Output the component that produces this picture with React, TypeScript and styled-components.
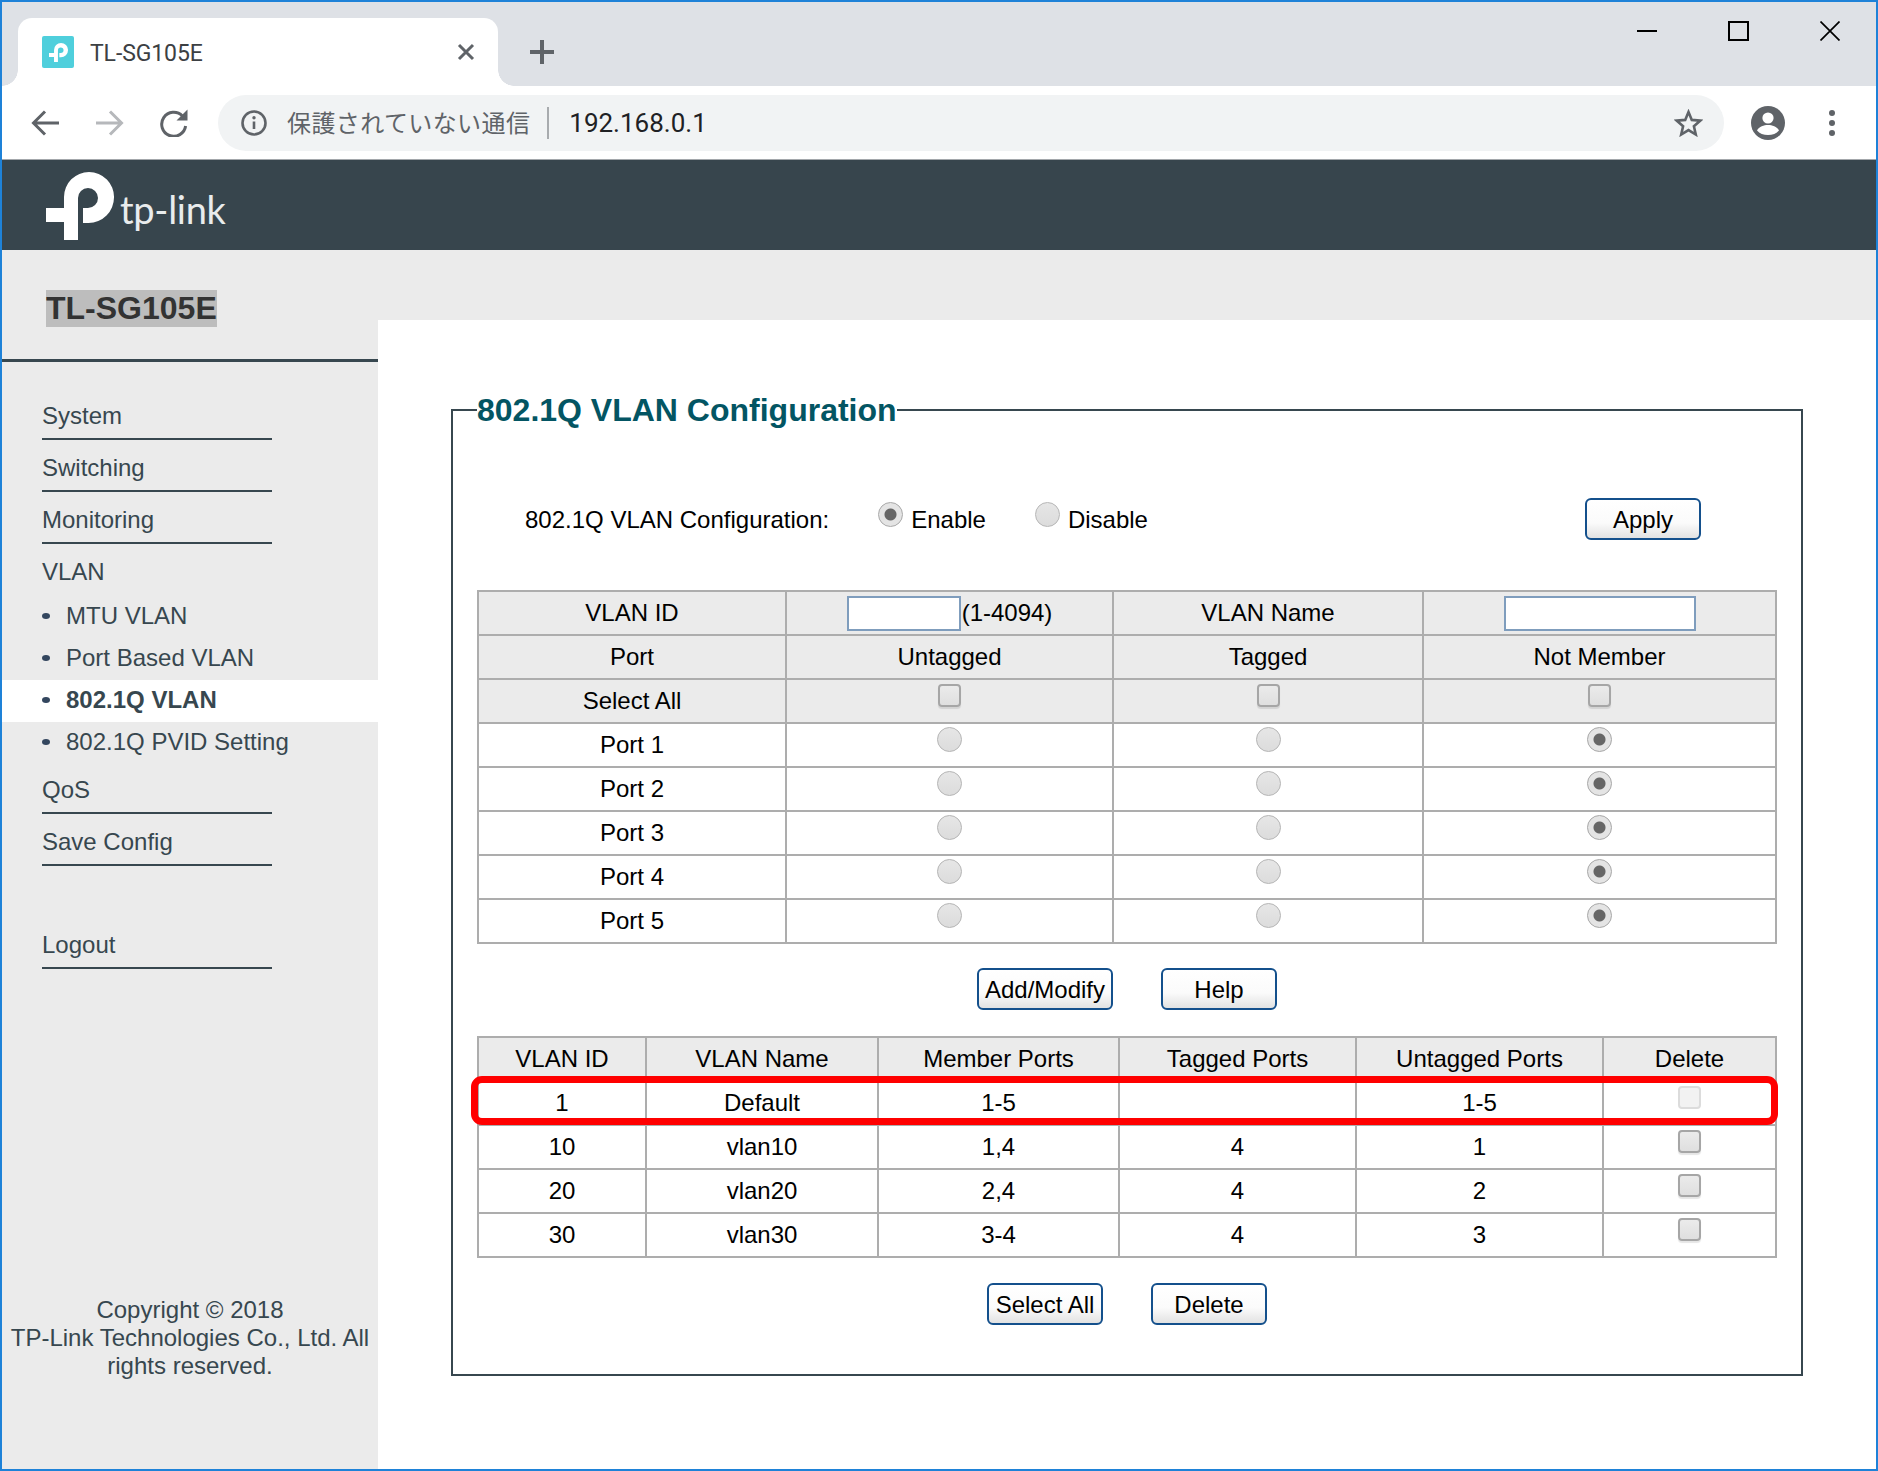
import React from "react";
import styled, { createGlobalStyle } from "styled-components";

const GlobalStyle = createGlobalStyle`
  html, body { margin: 0; padding: 0; background: #fff; }
  * { box-sizing: border-box; }
`;

const SANS = `"Liberation Sans", Arial, sans-serif`;
const UI = `Roboto, "Noto Sans", sans-serif`;
const INK = "#37474f";

const Window = styled.div`
  width: 1878px;
  height: 1471px;
  border: 2px solid #1e82d8;
  display: flex;
  flex-direction: column;
  overflow: hidden;
  font-family: ${SANS};
  background: #fff;
`;

const TabStrip = styled.div`
  height: 84px;
  flex: none;
  background: #dee1e6;
  padding: 16px 36px 0 16px;
  display: flex;
  align-items: flex-start;
`;

const Tab = styled.div`
  position: relative;
  width: 480px;
  height: 68px;
  background: #fff;
  border-radius: 14px 14px 0 0;
  display: flex;
  align-items: center;
  padding: 0 23px 0 24px;
  &::before,
  &::after {
    content: "";
    position: absolute;
    bottom: 0;
    width: 16px;
    height: 16px;
  }
  &::before {
    left: -16px;
    background: radial-gradient(circle at 0 0, transparent 15.5px, #fff 16px);
  }
  &::after {
    right: -16px;
    background: radial-gradient(circle at 100% 0, transparent 15.5px, #fff 16px);
  }
`;

const Favicon = styled.span`
  width: 32px;
  height: 32px;
  flex: none;
  border-radius: 2px;
  background: #4fcfdc;
  display: flex;
  align-items: center;
  justify-content: center;
`;

const TabTitle = styled.span`
  margin-left: 16px;
  padding-top: 3px;
  font: 400 23px/28px ${UI};
  letter-spacing: -0.1px;
  color: #3c4043;
`;

const TabClose = styled.svg`
  margin-left: auto;
  flex: none;
`;

const NewTab = styled.svg`
  margin: 22px 0 0 32px;
  flex: none;
`;

const WindowControls = styled.div`
  margin: 3px 0 0 auto;
  display: flex;
  gap: 71px;
`;

const Toolbar = styled.div`
  height: 74px;
  flex: none;
  background: #fff;
  border-bottom: 1px solid #a3a7ab;
  display: flex;
  align-items: center;
  padding-left: 11px;
`;

const NavSlot = styled.span`
  width: 64.5px;
  height: 40px;
  flex: none;
  display: flex;
  align-items: center;
  justify-content: center;
`;

const Omnibox = styled.div`
  margin-left: 11.5px;
  width: 1506px;
  height: 56px;
  border-radius: 28px;
  background: #f1f3f4;
  display: flex;
  align-items: center;
  padding: 0 21px 0 23px;
`;

const InsecureText = styled.span`
  margin: -2px 0 0 20px;
  font: 400 24px/32px "Noto Sans CJK JP", sans-serif;
  letter-spacing: 0.4px;
  color: #5f6368;
  white-space: nowrap;
`;

const OmniDivider = styled.span`
  width: 2px;
  height: 32px;
  margin-left: 17px;
  background: #a8abae;
`;

const Url = styled.span`
  margin-left: 20px;
  font: 400 26px/32px ${UI};
  color: #202124;
`;

const StarIcon = styled.svg`
  margin-left: auto;
`;

const AccountIcon = styled.svg`
  margin-left: 27px;
  flex: none;
`;

const MenuDots = styled.svg`
  margin-left: 41px;
  flex: none;
`;

const Header = styled.div`
  height: 90px;
  flex: none;
  background: #37454d;
  padding-left: 44px;
  display: flex;
  align-items: flex-start;
`;

const LogoMarkSvg = styled.svg`
  flex: none;
  display: block;
`;

const BrandMark = styled.span`
  display: block;
  margin-top: 12px;
`;

const Wordmark = styled.span`
  margin: 27px 0 0 6px;
  font: 400 38px/44px Lato, sans-serif;
  letter-spacing: -0.3px;
  color: #e9eced;
`;

const Body = styled.div`
  flex: 1;
  min-height: 0;
  display: flex;
`;

const Sidebar = styled.aside`
  width: 376px;
  flex: none;
  background: #ebebeb;
  display: flex;
  flex-direction: column;
  color: ${INK};
`;

const SideHead = styled.div`
  height: 112px;
  flex: none;
  padding: 40px 0 0 44px;
  border-bottom: 3px solid ${INK};
`;

const ModelName = styled.span`
  display: inline-block;
  height: 37px;
  font: 700 32px/37px ${SANS};
  color: #333;
  background: #bdbdbd;
`;

const Menu = styled.nav`
  padding-top: 26px;
  display: flex;
  flex-direction: column;
`;

const MenuItem = styled.div<{ $plain?: boolean; $tight?: boolean; $gap?: number }>`
  margin: ${(p) => p.$gap ?? 0}px 0 0 40px;
  width: 230px;
  height: ${(p) => (p.$tight ? 50 : 52)}px;
  padding-top: ${(p) => (p.$tight ? 12 : 14)}px;
  font-size: 24px;
  line-height: 28px;
  border-bottom: ${(p) => (p.$plain ? "none" : `2px solid ${INK}`)};
`;

const SubItem = styled.div<{ $active?: boolean }>`
  height: 42px;
  padding: 0 0 2px 40px;
  display: flex;
  align-items: center;
  font-size: 24px;
  font-weight: ${(p) => (p.$active ? 700 : 400)};
  background: ${(p) => (p.$active ? "#fff" : "transparent")};
  &::before {
    content: "";
    width: 8px;
    height: 6px;
    border-radius: 50%;
    background: #33465e;
    margin: -1px 16px 0 0;
    flex: none;
  }
`;

const Copyright = styled.div`
  margin-top: auto;
  padding: 0 8px 89px;
  text-align: center;
  font-size: 24px;
  line-height: 28px;
`;

const Main = styled.main`
  flex: 1;
  min-width: 0;
  display: flex;
  flex-direction: column;
`;

const TopBand = styled.div`
  height: 70px;
  flex: none;
  background: #ebebeb;
`;

const Panel = styled.fieldset`
  margin: 70px 73px 0;
  padding: 0 24px 49px;
  min-width: 0;
  border: 2px solid ${INK};
`;

const PanelTitle = styled.legend`
  padding: 2px 0 0;
  font: 700 32px/37px ${SANS};
  color: #035563;
`;

const ConfigRow = styled.div`
  margin-top: 69px;
  height: 42px;
  padding: 0 76px 0 48px;
  display: flex;
  align-items: center;
  font-size: 24px;
  color: #000;
`;

const ConfigLabel = styled.span`
  margin: 2px 49px 0 0;
`;

const RadioOption = styled.label`
  display: flex;
  align-items: center;
  margin-right: 49px;
  gap: 8px;
  & > span {
    margin-top: 2px;
  }
`;

const Radio = styled.input.attrs({ type: "radio" })<{ $inCell?: boolean }>`
  appearance: none;
  flex: none;
  display: block;
  width: 25px;
  height: 25px;
  margin: ${(p) => (p.$inCell ? "0 auto 11px" : "-9px 0 0")};
  border-radius: 50%;
  border: 1.5px solid #b6b6b6;
  background: linear-gradient(#e6e6e6, #dcdcdc);
  &:checked {
    border-color: #a8a8a8;
    background: radial-gradient(circle, #666 0, #666 5.5px, #e4e4e4 6.5px);
  }
`;

const Check = styled.input.attrs({ type: "checkbox" })`
  appearance: none;
  display: block;
  width: 23px;
  height: 23px;
  margin: 0 auto 11px;
  border-radius: 4px;
  border: 2px solid #a6a6a6;
  background: linear-gradient(#ebebeb, #dfdfdf);
  box-shadow: 0 2px 1px rgba(0, 0, 0, 0.1);
  &:disabled {
    border-color: #dcdcdc;
    background: #f2f2f2;
    box-shadow: none;
  }
`;

const Button = styled.button`
  min-width: 116px;
  height: 42px;
  padding: 1px 6px 0;
  border: 2px solid #14508c;
  border-radius: 6px;
  background: linear-gradient(#fff 0, #fbfbfb 60%, #e2e2e2 100%);
  font: 400 24px/28px ${SANS};
  color: #000;
`;

const ApplyButton = styled(Button)`
  margin-left: auto;
`;

const Table = styled.table`
  width: 1298px;
  table-layout: fixed;
  border-collapse: collapse;
  font-size: 24px;
  color: #000;
`;

const TopTable = styled(Table)`
  margin-top: 50px;
`;

const Row = styled.tr<{ $head?: boolean }>`
  height: 44px;
  background: ${(p) => (p.$head ? "#ebebeb" : "#fff")};
`;

const Cell = styled.td`
  padding: 0;
  border: 2px solid #adadad;
  text-align: center;
  vertical-align: middle;
`;

const RangeField = styled.div`
  display: flex;
  align-items: center;
  justify-content: center;
  gap: 1px;
`;

const TextInput = styled.input<{ $w: number }>`
  width: ${(p) => p.$w}px;
  height: 35px;
  padding: 0;
  background: #fff;
  border: 2px solid #7f9dbd;
  border-radius: 0;
  display: block;
`;

const ButtonRow = styled.div<{ $top: number }>`
  margin-top: ${(p) => p.$top}px;
  display: flex;
  justify-content: center;
  gap: 48px;
`;

const TableWrap = styled.div`
  position: relative;
  margin-top: 26px;
`;

const Highlight = styled.div`
  position: absolute;
  left: -6px;
  top: 40px;
  width: 1307px;
  height: 49px;
  border: 7px solid #ff0000;
  border-radius: 11px;
  pointer-events: none;
`;

const LogoMark = ({ size, fill }: { size: number; fill: string }) => (
  <LogoMarkSvg width={size} height={size} viewBox="46 172 68 68">
    <path
      fill={fill}
      d="M46 208H64V197A25 25 0 0 1 89 172A25 25 0 0 1 114 197.5A25.5 25.5 0 0 1 88.5 223H83V208H88A10 10 0 0 0 88 188A10 10 0 0 0 78 198V240H64V222H46Z"
    />
  </LogoMarkSvg>
);

const GREY = "#5f6368";

const topRows = [1, 2, 3, 4, 5];
const vlans = [
  { id: "1", name: "Default", member: "1-5", tagged: "", untagged: "1-5", locked: true },
  { id: "10", name: "vlan10", member: "1,4", tagged: "4", untagged: "1" },
  { id: "20", name: "vlan20", member: "2,4", tagged: "4", untagged: "2" },
  { id: "30", name: "vlan30", member: "3-4", tagged: "4", untagged: "3" },
];

export default function App() {
  return (
    <>
      <GlobalStyle />
      <Window>
        <TabStrip>
          <Tab>
            <Favicon>
              <LogoMark size={19} fill="#fff" />
            </Favicon>
            <TabTitle>TL-SG105E</TabTitle>
            <TabClose width="18" height="18" viewBox="0 0 18 18">
              <path d="M2 2L16 16M16 2L2 16" stroke={GREY} strokeWidth="3" />
            </TabClose>
          </Tab>
          <NewTab width="24" height="24" viewBox="0 0 24 24">
            <path d="M12 0V24M0 12H24" stroke={GREY} strokeWidth="4" />
          </NewTab>
          <WindowControls>
            <svg width="20" height="20" viewBox="0 0 20 20">
              <path d="M0 10H20" stroke="#000" strokeWidth="2" />
            </svg>
            <svg width="21" height="20" viewBox="0 0 21 20">
              <rect x="1" y="1" width="19" height="18" fill="none" stroke="#000" strokeWidth="2" />
            </svg>
            <svg width="20" height="20" viewBox="0 0 20 20">
              <path d="M0.5 0.5L19.5 19.5M19.5 0.5L0.5 19.5" stroke="#000" strokeWidth="1.7" />
            </svg>
          </WindowControls>
        </TabStrip>

        <Toolbar>
          <NavSlot>
            <svg width="28" height="26" viewBox="0 0 28 26" fill="none">
              <path d="M28 13H3M14 1.5L2.5 13L14 24.5" stroke={GREY} strokeWidth="3" />
            </svg>
          </NavSlot>
          <NavSlot>
            <svg width="28" height="26" viewBox="0 0 28 26" fill="none">
              <path d="M0 13H25M14 1.5L25.5 13L14 24.5" stroke="#b6b8bb" strokeWidth="3" />
            </svg>
          </NavSlot>
          <NavSlot>
            <svg width="28" height="28" viewBox="0 0 28 28" fill="none">
              <path d="M22.4 7A12 12 0 1 0 25.6 17" stroke={GREY} strokeWidth="3" />
              <path d="M16.5 11.5H27.5V0.5Z" fill={GREY} />
            </svg>
          </NavSlot>
          <Omnibox>
            <svg width="26" height="26" viewBox="0 0 26 26" fill="none">
              <circle cx="13" cy="13" r="11.5" stroke={GREY} strokeWidth="2.6" />
              <path d="M13 11.5V19" stroke={GREY} strokeWidth="2.6" />
              <circle cx="13" cy="7.8" r="1.7" fill={GREY} />
            </svg>
            <InsecureText>保護されていない通信</InsecureText>
            <OmniDivider />
            <Url>192.168.0.1</Url>
            <StarIcon width="29" height="28" viewBox="0 0 29 28" fill="none">
              <path
                d="M14.5 3L17.8 10.9L26.4 11.6L19.9 17.2L21.8 25.5L14.5 21.1L7.2 25.5L9.1 17.2L2.6 11.6L11.2 10.9Z"
                stroke={GREY}
                strokeWidth="2.6"
                strokeLinejoin="miter"
              />
            </StarIcon>
          </Omnibox>
          <AccountIcon width="34" height="34" viewBox="0 0 34 34">
            <circle cx="17" cy="17" r="17" fill={GREY} />
            <circle cx="17" cy="12" r="5.6" fill="#fff" />
            <path d="M6 24.5C8 20.5 13 19 17 19C21 19 26 20.5 28 24.5C25.5 27.5 21.5 29 17 29C12.5 29 8.5 27.5 6 24.5Z" fill="#fff" />
          </AccountIcon>
          <MenuDots width="12" height="28" viewBox="0 0 12 28">
            <circle cx="6" cy="4" r="3" fill={GREY} />
            <circle cx="6" cy="14" r="3" fill={GREY} />
            <circle cx="6" cy="24" r="3" fill={GREY} />
          </MenuDots>
        </Toolbar>

        <Header>
          <BrandMark>
            <LogoMark size={68} fill="#fff" />
          </BrandMark>
          <Wordmark>tp-link</Wordmark>
        </Header>

        <Body>
          <Sidebar>
            <SideHead>
              <ModelName>TL-SG105E</ModelName>
            </SideHead>
            <Menu>
              <MenuItem>System</MenuItem>
              <MenuItem>Switching</MenuItem>
              <MenuItem>Monitoring</MenuItem>
              <MenuItem $plain>VLAN</MenuItem>
              <SubItem>MTU VLAN</SubItem>
              <SubItem>Port Based VLAN</SubItem>
              <SubItem $active>802.1Q VLAN</SubItem>
              <SubItem>802.1Q PVID Setting</SubItem>
              <MenuItem $tight>QoS</MenuItem>
              <MenuItem>Save Config</MenuItem>
              <MenuItem $gap={51}>Logout</MenuItem>
            </Menu>
            <Copyright>
              Copyright © 2018
              <br />
              TP-Link Technologies Co., Ltd. All rights reserved.
            </Copyright>
          </Sidebar>

          <Main>
            <TopBand />
            <Panel>
              <PanelTitle>802.1Q VLAN Configuration</PanelTitle>
              <ConfigRow>
                <ConfigLabel>802.1Q VLAN Configuration:</ConfigLabel>
                <RadioOption>
                  <Radio name="state" defaultChecked />
                  <span>Enable</span>
                </RadioOption>
                <RadioOption>
                  <Radio name="state" />
                  <span>Disable</span>
                </RadioOption>
                <ApplyButton>Apply</ApplyButton>
              </ConfigRow>

              <TopTable>
                <colgroup>
                  <col width="308" />
                  <col width="327" />
                  <col width="310" />
                  <col width="353" />
                </colgroup>
                <tbody>
                  <Row $head>
                    <Cell>VLAN ID</Cell>
                    <Cell>
                      <RangeField>
                        <TextInput $w={114} />
                        (1-4094)
                      </RangeField>
                    </Cell>
                    <Cell>VLAN Name</Cell>
                    <Cell>
                      <RangeField>
                        <TextInput $w={192} />
                      </RangeField>
                    </Cell>
                  </Row>
                  <Row $head>
                    <Cell>Port</Cell>
                    <Cell>Untagged</Cell>
                    <Cell>Tagged</Cell>
                    <Cell>Not Member</Cell>
                  </Row>
                  <Row $head>
                    <Cell>Select All</Cell>
                    <Cell><Check /></Cell>
                    <Cell><Check /></Cell>
                    <Cell><Check /></Cell>
                  </Row>
                  {topRows.map((n) => (
                    <Row key={n}>
                      <Cell>Port {n}</Cell>
                      <Cell><Radio $inCell name={`port${n}`} /></Cell>
                      <Cell><Radio $inCell name={`port${n}`} /></Cell>
                      <Cell><Radio $inCell name={`port${n}`} defaultChecked /></Cell>
                    </Row>
                  ))}
                </tbody>
              </TopTable>

              <ButtonRow $top={24}>
                <Button>Add/Modify</Button>
                <Button>Help</Button>
              </ButtonRow>

              <TableWrap>
                <Table>
                  <colgroup>
                    <col width="168" />
                    <col width="232" />
                    <col width="241" />
                    <col width="237" />
                    <col width="247" />
                    <col width="173" />
                  </colgroup>
                  <tbody>
                    <Row $head>
                      <Cell>VLAN ID</Cell>
                      <Cell>VLAN Name</Cell>
                      <Cell>Member Ports</Cell>
                      <Cell>Tagged Ports</Cell>
                      <Cell>Untagged Ports</Cell>
                      <Cell>Delete</Cell>
                    </Row>
                    {vlans.map((v) => (
                      <Row key={v.id}>
                        <Cell>{v.id}</Cell>
                        <Cell>{v.name}</Cell>
                        <Cell>{v.member}</Cell>
                        <Cell>{v.tagged}</Cell>
                        <Cell>{v.untagged}</Cell>
                        <Cell><Check disabled={v.locked} /></Cell>
                      </Row>
                    ))}
                  </tbody>
                </Table>
                <Highlight />
              </TableWrap>

              <ButtonRow $top={25}>
                <Button>Select All</Button>
                <Button>Delete</Button>
              </ButtonRow>
            </Panel>
          </Main>
        </Body>
      </Window>
    </>
  );
}
